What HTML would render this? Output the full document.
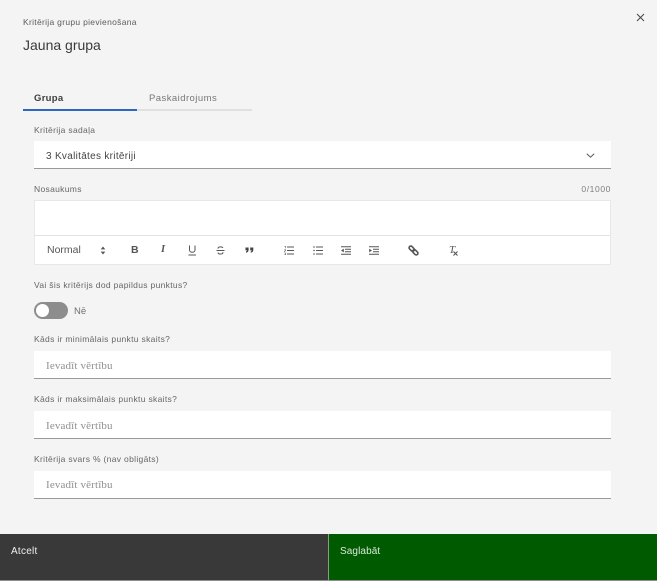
<!DOCTYPE html>
<html lang="lv">
<head>
<meta charset="utf-8">
<title>Jauna grupa</title>
<style>
html,body{margin:0;padding:0;background:#f4f4f4}
body{width:657px;height:581px;position:relative;overflow:hidden;font-family:"Liberation Sans",sans-serif}
#w{position:absolute;left:0;top:0;width:657px;height:581px;filter:blur(.35px)}
.t{position:absolute;white-space:nowrap;line-height:14px}
.l{font-size:8.5px;color:#666;letter-spacing:.32px}
.box{position:absolute;left:34px;width:577px;background:#fff}
.inp{height:27px;border-bottom:1px solid #999}
.ph{font-family:"Liberation Serif",serif;font-size:11px;color:#8f8f8f;letter-spacing:.15px;left:46px}
svg{position:absolute;overflow:visible}
</style>
</head>
<body>
<div id="w">
<div class="t" style="left:23px;top:15px;font-size:8.5px;color:#5c5c5c;letter-spacing:.3px">Kritērija grupu pievienošana</div>
<div class="t" style="left:23px;top:38px;font-size:14px;color:#3a3a3a">Jauna grupa</div>
<svg style="left:636px;top:13px" width="9" height="9" viewBox="0 0 9 9"><path d="M1 1L8 8M8 1L1 8" stroke="#444" stroke-width="1" fill="none"/></svg>

<div class="t" style="left:34px;top:92px;font-size:9.5px;font-weight:bold;color:#3d3d3d;letter-spacing:.3px">Grupa</div>
<div class="t" style="left:149px;top:92px;font-size:9.5px;color:#777;letter-spacing:.45px">Paskaidrojums</div>
<div style="position:absolute;left:23px;top:109px;width:114px;height:1.5px;background:#2f66c4"></div>
<div style="position:absolute;left:137px;top:109px;width:115px;height:1.5px;background:#e0e0e0"></div>

<div class="t l" style="left:34px;top:123px">Kritērija sadaļa</div>
<div class="box" style="top:141px;height:27px;border-bottom:1px solid #999"></div>
<div class="t" style="left:46px;top:150px;font-size:10px;color:#444;letter-spacing:.3px">3 Kvalitātes kritēriji</div>
<svg style="left:586px;top:153px" width="9" height="5" viewBox="0 0 9 5"><path d="M.8.8L4.5 4.2L8.2.8" stroke="#555" stroke-width="1" fill="none"/></svg>

<div class="t l" style="left:34px;top:182px">Nosaukums</div>
<div class="t l" style="right:46px;top:182px;color:#808080;letter-spacing:.6px">0/1000</div>
<div class="box" style="top:200px;width:575px;height:63px;border:1px solid #e8e8e8"></div>
<div style="position:absolute;left:35px;top:235px;width:575px;height:1px;background:#e2e2e2"></div>
<div class="t" style="left:47px;top:243px;font-size:10.5px;color:#555">Normal</div>
<svg style="left:100px;top:246px" width="6" height="9" viewBox="0 0 6 9"><path d="M3 .5L5.3 3.4H.7ZM3 8.5L.7 5.6H5.3Z" fill="#555"/></svg>
<div class="t" style="left:131px;top:243px;font-size:10.5px;font-weight:bold;color:#555">B</div>
<div class="t" style="left:161px;top:243px;font-family:'Liberation Serif',serif;font-size:10.5px;font-style:italic;font-weight:bold;color:#555">I</div>
<svg style="left:188px;top:245px" width="9" height="11" viewBox="0 0 9 11"><path d="M1.5 .5V5C1.5 8 7 8 7 5V.5M.5 10H8" stroke="#555" stroke-width="1" fill="none"/></svg>
<svg style="left:216px;top:246px" width="9" height="9" viewBox="0 0 9 9"><path d="M7 1.8C6 .4 2 .4 2 2.6M2 6.6C2.4 8.6 7 8.6 7 6.2M.5 4.5H8.5" stroke="#555" stroke-width="1" fill="none"/></svg>
<svg style="left:245px;top:247px" width="9" height="6" viewBox="0 0 9 6"><path d="M.5.5H3.6V3C3.6 4.5 2.6 5.5 1 5.7V4.5C1.6 4.3 1.9 4 2 3.4H.5ZM5.2.5H8.3V3C8.3 4.5 7.3 5.5 5.7 5.7V4.5C6.3 4.3 6.6 4 6.7 3.4H5.2Z" fill="#444"/></svg>
<svg style="left:284px;top:246px" width="10" height="9" viewBox="0 0 10 9"><path d="M3 1H10M3 4.5H10M3 8H10" stroke="#555" stroke-width="1" fill="none"/><path d="M.5.3H1.5V2.2M.4 3.7H1.6V5H.4V6.2M.4 7H1.7V8.7H.4" stroke="#666" stroke-width=".6" fill="none"/></svg>
<svg style="left:313px;top:246px" width="10" height="9" viewBox="0 0 10 9"><path d="M3 1H10M3 4.5H10M3 8H10" stroke="#555" stroke-width="1" fill="none"/><path d="M.3 1H1.7M.3 4.5H1.7M.3 8H1.7" stroke="#555" stroke-width="1.2" fill="none"/></svg>
<svg style="left:341px;top:246px" width="10" height="9" viewBox="0 0 10 9"><path d="M0 .8H10M4 3.3H10M4 5.8H10M0 8.3H10" stroke="#555" stroke-width="1" fill="none"/><path d="M0 4.5L2.8 2.6V6.4Z" fill="#555"/></svg>
<svg style="left:369px;top:246px" width="10" height="9" viewBox="0 0 10 9"><path d="M0 .8H10M4 3.3H10M4 5.8H10M0 8.3H10" stroke="#555" stroke-width="1" fill="none"/><path d="M3 4.5L.2 2.6V6.4Z" fill="#555"/></svg>
<svg style="left:408px;top:245px" width="11" height="11" viewBox="0 0 11 11"><g fill="none" stroke="#555" stroke-width="1.6"><rect x="-3" y="-1.7" width="6" height="3.4" rx="1.7" transform="translate(3.7 3.7) rotate(45)"/><rect x="-3" y="-1.7" width="6" height="3.4" rx="1.7" transform="translate(7.3 7.3) rotate(45)"/></g></svg>
<div class="t" style="left:449px;top:243px;font-family:'Liberation Serif',serif;font-size:11px;font-style:italic;color:#555">T</div>
<svg style="left:453px;top:251px" width="5" height="5" viewBox="0 0 5 5"><path d="M.5.5L4.5 4.5M4.5.5L.5 4.5" stroke="#555" stroke-width="1.1" fill="none"/></svg>

<div class="t l" style="left:34px;top:278px">Vai šis kritērijs dod papildus punktus?</div>
<div style="position:absolute;left:34px;top:302px;width:34px;height:17px;border-radius:9px;background:#8d8d8d"></div>
<div style="position:absolute;left:36px;top:304px;width:13px;height:13px;border-radius:50%;background:#fff"></div>
<div class="t" style="left:74px;top:305px;font-size:9.5px;color:#707070">Nē</div>

<div class="t l" style="left:34px;top:332px">Kāds ir minimālais punktu skaits?</div>
<div class="box inp" style="top:351px"></div>
<div class="t ph" style="top:359px">Ievadīt vērtību</div>

<div class="t l" style="left:34px;top:392px">Kāds ir maksimālais punktu skaits?</div>
<div class="box inp" style="top:411px"></div>
<div class="t ph" style="top:419px">Ievadīt vērtību</div>

<div class="t l" style="left:34px;top:452px">Kritērija svars % (nav obligāts)</div>
<div class="box inp" style="top:471px"></div>
<div class="t ph" style="top:478px">Ievadīt vērtību</div>

<div style="position:absolute;left:0;top:534px;width:328px;height:46px;background:#393939"></div>
<div style="position:absolute;left:328px;top:534px;width:1px;height:46px;background:#8a9a8a"></div>
<div style="position:absolute;left:329px;top:534px;width:328px;height:46px;background:#005a00"></div>
<div style="position:absolute;left:0;top:580px;width:657px;height:1px;background:#8d8d8d"></div>
<div class="t" style="left:11px;top:545px;font-size:10px;color:#f0f0f0;letter-spacing:.25px">Atcelt</div>
<div class="t" style="left:340px;top:545px;font-size:10px;color:#d8ead8;letter-spacing:.1px">Saglabāt</div>
</div>
</body>
</html>
